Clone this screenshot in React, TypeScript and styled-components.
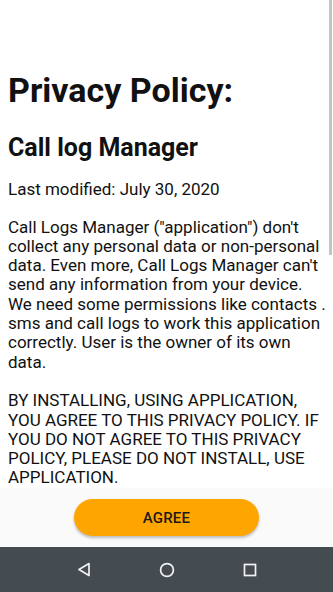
import React from "react";
import styled, { createGlobalStyle } from "styled-components";

const Global = createGlobalStyle`
  html, body { margin: 0; padding: 0; background: #ffffff; }
  body { font-family: Roboto, "Noto Sans", Arial, sans-serif; -webkit-font-smoothing: antialiased; }
  * { box-sizing: border-box; }
`;

const Screen = styled.div`
  width: 333px;
  height: 592px;
  display: flex;
  flex-direction: column;
  overflow: hidden;
  background: #ffffff;
`;

const Content = styled.div`
  position: relative;
  height: 488px;
  flex: none;
  overflow: hidden;
  padding: 70px 4px 0 8px;
  color: #111111;
`;

const Title = styled.h1`
  margin: 0;
  font-size: 34px;
  line-height: 40px;
  font-weight: 700;
`;

const Subtitle = styled.h2`
  margin: 23px 0 0 0;
  font-size: 25px;
  line-height: 29px;
  font-weight: 700;
`;

const Para = styled.p<{ $gap: number }>`
  margin: ${(p) => p.$gap}px 0 0 0;
  font-size: 17px;
  line-height: 19.3px;
  font-weight: 400;
`;

const ScrollThumb = styled.div`
  position: absolute;
  top: 0;
  right: 1px;
  width: 3px;
  height: 255px;
  background: #c4c4c4;
`;

const Footer = styled.div`
  height: 59px;
  flex: none;
  background: #fafafa;
  display: flex;
  justify-content: center;
  padding-top: 11px;
`;

const AgreeButton = styled.button`
  width: 185px;
  height: 37px;
  border: none;
  border-radius: 19px;
  background: #ffa500;
  box-shadow: 0 2px 3px rgba(0, 0, 0, 0.25);
  font-family: Roboto, Arial, sans-serif;
  font-size: 15px;
  font-weight: 500;
  color: #1a1a1a;
  letter-spacing: 0.2px;
  padding: 0;
`;

const NavBar = styled.div`
  flex: 1;
  background: #444b51;
  display: grid;
  grid-template-columns: repeat(3, 83px);
  justify-content: center;
  align-items: center;
`;

const NavSlot = styled.div`
  display: flex;
  justify-content: center;
  align-items: center;
`;

export default function App() {
  return (
    <>
      <Global />
      <Screen>
        <Content>
          <Title>Privacy Policy:</Title>
          <Subtitle>Call log Manager</Subtitle>
          <Para $gap={18}>Last modified: July 30, 2020</Para>
          <Para $gap={18.3}>
            Call Logs Manager ("application") don't collect any personal data or non-personal data. Even more, Call Logs
            Manager can't send any information from your device.
            <br />
            We need some permissions like contacts . sms and call logs to work this application correctly. User is the
            owner of its own data.
          </Para>
          <Para $gap={19.3}>
            BY INSTALLING, USING APPLICATION, YOU AGREE TO THIS PRIVACY POLICY. IF YOU DO NOT AGREE TO THIS PRIVACY
            POLICY, PLEASE DO NOT INSTALL, USE APPLICATION.
          </Para>
          <ScrollThumb />
        </Content>
        <Footer>
          <AgreeButton>AGREE</AgreeButton>
        </Footer>
        <NavBar>
          <NavSlot>
            <svg width="14" height="15" viewBox="0 0 14 15">
              <path d="M12 1.5 L2 7.5 L12 13.5 Z" fill="none" stroke="#f2f2f2" strokeWidth="1.7" strokeLinejoin="round" />
            </svg>
          </NavSlot>
          <NavSlot>
            <svg width="16" height="16" viewBox="0 0 16 16">
              <circle cx="8" cy="8" r="6.4" fill="none" stroke="#f2f2f2" strokeWidth="1.7" />
            </svg>
          </NavSlot>
          <NavSlot>
            <svg width="14" height="14" viewBox="0 0 14 14">
              <rect x="1.5" y="1.5" width="11" height="11" fill="none" stroke="#f2f2f2" strokeWidth="1.7" />
            </svg>
          </NavSlot>
        </NavBar>
      </Screen>
    </>
  );
}
